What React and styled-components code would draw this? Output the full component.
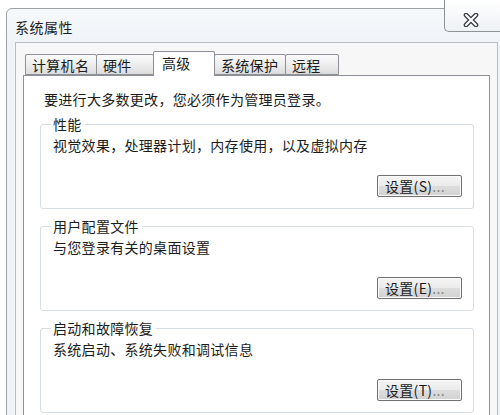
import React from 'react';
import styled, { createGlobalStyle } from 'styled-components';

const GlobalStyle = createGlobalStyle`
  body {
    margin: 0;
    background: #ffffff;
    overflow: hidden;
    font-family: "Noto Sans CJK SC", "Noto Sans", sans-serif;
    font-size: 14px;
    color: #1b1b1b;
    letter-spacing: 0.3px;
  }
`;

const Page = styled.div`
  width: 500px;
  height: 415px;
  overflow: hidden;
  padding: 8px 0 0 6px;
  box-sizing: border-box;
`;

const Window = styled.div`
  box-sizing: border-box;
  width: 495px;
  height: 440px;
  border: 1px solid #9aa0a6;
  border-top-left-radius: 6px;
  background: linear-gradient(#f6f9fc, #eef3f8 40px);
  display: flex;
  flex-direction: column;
  padding: 0 2px 0 8px;
`;

const TitleBar = styled.div`
  display: flex;
  align-items: flex-start;
  height: 33px;
  margin-right: -2px;
`;

const Title = styled.div`
  padding-top: 9px;
  line-height: 18px;
  letter-spacing: 0.5px;
`;

const CloseButton = styled.div`
  margin-left: auto;
  margin-top: -9px;
  width: 56px;
  height: 32px;
  box-sizing: border-box;
  border: 1px solid #8c9298;
  border-top: none;
  border-right: none;
  border-bottom-left-radius: 5px;
  background: linear-gradient(#ffffff, #eef1f4);
  display: flex;
  align-items: center;
  justify-content: center;
  padding: 8px 4px 0 0;
`;

const Frame = styled.div`
  flex: 1;
  display: flex;
  flex-direction: column;
  border: 1px solid #b9bdc2;
  border-bottom: none;
  background: #f7f7f7;
  padding: 8px 7px 0 7px;
`;

const TabRow = styled.div`
  display: flex;
  align-items: flex-end;
  padding-left: 3px;
  position: relative;
  z-index: 1;
`;

const Tab = styled.div`
  box-sizing: border-box;
  width: ${p => p.$w}px;
  height: ${p => (p.$active ? 25 : 21)}px;
  margin-left: -1px;
  margin-bottom: ${p => (p.$active ? -1 : 0)}px;
  padding-left: ${p => (p.$active ? 8 : 6)}px;
  line-height: ${p => (p.$active ? 22 : 20)}px;
  border: 1px solid #8d9096;
  border-bottom: ${p => (p.$active ? 'none' : '1px solid #8d9096')};
  border-radius: 2px 2px 0 0;
  background: ${p =>
    p.$active ? '#ffffff' : 'linear-gradient(#fbfbfb, #ececec 55%, #dcdcdc)'};
  position: relative;
  z-index: ${p => (p.$active ? 2 : 1)};
  white-space: nowrap;
`;

const Panel = styled.div`
  flex: 1;
  background: #ffffff;
  border: 1px solid #8d9096;
  border-bottom: none;
  padding-top: 14px;
`;

const Intro = styled.div`
  padding-left: 20px;
  line-height: 18px;
`;

const Group = styled.fieldset`
  margin: ${p => (p.$first ? 7 : 8)}px 15px 0 16px;
  padding: 0 11px 11px 12px;
  border: 1px solid #d6dde3;
  border-radius: 3px;
  display: flex;
  flex-direction: column;
  min-inline-size: auto;
`;

const Legend = styled.legend`
  padding: 0 3px 0 2px;
  margin-left: -2px;
  line-height: 18px;
`;

const Desc = styled.div`
  margin-top: 3px;
  line-height: 18px;
`;

const Button = styled.button`
  align-self: flex-end;
  margin-top: 21px;
  width: 85px;
  height: 22px;
  box-sizing: border-box;
  border: 1px solid #707070;
  border-radius: 2px;
  background: linear-gradient(#f4f4f4 0%, #ebebeb 50%, #dddddd 51%, #d2d2d2 100%);
  font-family: inherit;
  font-size: 14px;
  letter-spacing: 0.3px;
  color: #1b1b1b;
  text-align: left;
  padding: 0 0 0 7px;
  line-height: 18px;
  box-shadow: inset 0 0 0 1px #fbfbfb;
`;

const Dots = styled.span`
  color: #8a8a8a;
`;

const CloseIcon = () => (
  <svg width="16" height="14" viewBox="0 0 16 14">
    <path d="M3 2 L13 12 M13 2 L3 12" stroke="#3c3f44" strokeWidth="4.6" strokeLinecap="round" />
    <path d="M3 2 L13 12 M13 2 L3 12" stroke="#ffffff" strokeWidth="2" strokeLinecap="round" />
  </svg>
);

const tabs = [
  { label: '计算机名', w: 72 },
  { label: '硬件', w: 58 },
  { label: '高级', w: 62, active: true },
  { label: '系统保护', w: 72 },
  { label: '远程', w: 54 },
];

const groups = [
  { title: '性能', desc: '视觉效果，处理器计划，内存使用，以及虚拟内存', key: 'S' },
  { title: '用户配置文件', desc: '与您登录有关的桌面设置', key: 'E' },
  { title: '启动和故障恢复', desc: '系统启动、系统失败和调试信息', key: 'T' },
];

export default function App() {
  return (
    <Page>
      <GlobalStyle />
      <Window>
        <TitleBar>
          <Title>系统属性</Title>
          <CloseButton>
            <CloseIcon />
          </CloseButton>
        </TitleBar>
        <Frame>
          <TabRow>
            {tabs.map(t => (
              <Tab key={t.label} $w={t.w} $active={t.active}>
                {t.label}
              </Tab>
            ))}
          </TabRow>
          <Panel>
            <Intro>要进行大多数更改，您必须作为管理员登录。</Intro>
            {groups.map((g, i) => (
              <Group key={g.title} $first={i === 0}>
                <Legend>{g.title}</Legend>
                <Desc>{g.desc}</Desc>
                <Button>
                  设置({g.key})<Dots>...</Dots>
                </Button>
              </Group>
            ))}
          </Panel>
        </Frame>
      </Window>
    </Page>
  );
}
